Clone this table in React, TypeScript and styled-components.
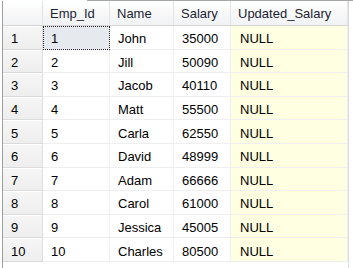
import React from "react";
import styled, { createGlobalStyle } from "styled-components";

const GlobalStyle = createGlobalStyle`
  html, body {
    margin: 0;
    padding: 0;
    background: #ffffff;
  }
  body {
    font-family: "Liberation Sans", Arial, sans-serif;
    font-size: 13px;
    color: #000;
  }
`;

const rows = [
  { id: 1, name: "John", salary: 35000 },
  { id: 2, name: "Jill", salary: 50090 },
  { id: 3, name: "Jacob", salary: 40110 },
  { id: 4, name: "Matt", salary: 55500 },
  { id: 5, name: "Carla", salary: 62550 },
  { id: 6, name: "David", salary: 48999 },
  { id: 7, name: "Adam", salary: 66666 },
  { id: 8, name: "Carol", salary: 61000 },
  { id: 9, name: "Jessica", salary: 45005 },
  { id: 10, name: "Charles", salary: 80500 },
];

const Frame = styled.div`
  width: 353px;
  height: 268px;
  overflow: hidden;
  display: flex;
  flex-direction: column;
`;

const TopEdge = styled.div`
  height: 1px;
  margin-left: 87px;
  background: #a7a7a7;
  flex: none;
`;

const Grid = styled.div`
  margin-left: 2px;
  margin-right: 4px;
  border-left: 1px solid #a0a0a0;
  border-right: 1px solid #dcdcdc;
  display: grid;
  grid-template-columns: 40px 67px 64px 57px 1fr;
  grid-template-rows: 25px repeat(10, 23.6px);
  flex: 1;
  align-content: start;
`;

const HeaderCell = styled.div`
  background: linear-gradient(#ffffff, #f1f2f4);
  border-right: 1px solid #e3e4e6;
  border-bottom: 1px solid #d5d5d5;
  padding: 1px 0 0 7px;
  display: flex;
  align-items: center;
  color: #1c2433;
  white-space: nowrap;
`;

const RowHead = styled.div`
  background: linear-gradient(#f6f6f6, #eeeeee);
  border-right: 1px solid #dfdfdf;
  border-bottom: 1px solid #dadada;
  box-shadow: inset 0 1px 0 #ffffff;
  padding: 3px 0 0 8px;
  display: flex;
  align-items: center;
`;

const Cell = styled.div<{ $null?: boolean; $focus?: boolean }>`
  background: ${(p) => (p.$null ? "#ffffe1" : p.$focus ? "#e6eaef" : "#ffffff")};
  border-right: 1px solid #efefef;
  border-bottom: 1px solid #efefef;
  outline: ${(p) => (p.$focus ? "1px dotted #222" : "none")};
  outline-offset: -1px;
  padding: 3px 0 0 ${(p) => (p.$null ? 9 : 8)}px;
  display: flex;
  align-items: center;
  white-space: nowrap;
`;

const App = () => {
  return (
    <Frame>
      <GlobalStyle />
      <TopEdge />
      <Grid>
        <HeaderCell />
        <HeaderCell>Emp_Id</HeaderCell>
        <HeaderCell>Name</HeaderCell>
        <HeaderCell>Salary</HeaderCell>
        <HeaderCell>Updated_Salary</HeaderCell>
        {rows.map((r, i) => (
          <React.Fragment key={r.id}>
            <RowHead>{i + 1}</RowHead>
            <Cell $focus={i === 0}>{r.id}</Cell>
            <Cell>{r.name}</Cell>
            <Cell>{r.salary}</Cell>
            <Cell $null>NULL</Cell>
          </React.Fragment>
        ))}
      </Grid>
    </Frame>
  );
};

export default App;
